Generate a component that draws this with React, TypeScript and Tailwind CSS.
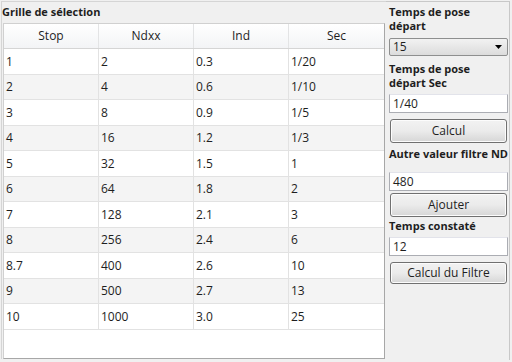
import React from 'react';

const rows = [
  ['1', '2', '0.3', '1/20'],
  ['2', '4', '0.6', '1/10'],
  ['3', '8', '0.9', '1/5'],
  ['4', '16', '1.2', '1/3'],
  ['5', '32', '1.5', '1'],
  ['6', '64', '1.8', '2'],
  ['7', '128', '2.1', '3'],
  ['8', '256', '2.4', '6'],
  ['8.7', '400', '2.6', '10'],
  ['9', '500', '2.7', '13'],
  ['10', '1000', '3.0', '25'],
];

const headers = ['Stop', 'Ndxx', 'Ind', 'Sec'];

function Button({ label }: { label: string }) {
  return (
    <button
      type="button"
      className="w-[117px] ml-px rounded-[3px] border border-[#707070] bg-gradient-to-b from-[#f2f2f2] via-[#ebebeb] to-[#d6d6d6] text-[12px] text-[#1e1e1e] shadow-[inset_0_0_0_1px_#fcfcfc]"
    >
      {label}
    </button>
  );
}

function Field({ value }: { value: string }) {
  return (
    <div className="h-[19px] border border-[#abadb3] border-t-[#e2e3ea] bg-white pl-[3px] text-[12px] leading-[17px] text-[#1e1e1e]">
      {value}
    </div>
  );
}

function Label({ children }: { children: React.ReactNode }) {
  return (
    <div className="h-[14px] text-[11px] font-bold leading-[14px] text-[#1e1e1e] whitespace-nowrap">
      {children}
    </div>
  );
}

export default function App() {
  return (
    <div className="w-[512px] h-[362px] bg-[#f0f0f0] flex font-['Open_Sans','Noto_Sans',sans-serif] overflow-hidden">
      <div className="w-[386px] pt-px pl-px">
        <div className="h-[358px] border-t border-l border-[#d5d5d5] flex flex-col">
          <div className="h-[21px] text-[11px] font-bold leading-[20px] text-[#1e1e1e]">
            Grille de sélection
          </div>
          <div className="ml-px w-[382px] flex-1 border border-[#a7a7a7] border-t-[#d0d0d0] border-l-[#d0d0d0] bg-white">
            <div className="grid grid-cols-4 h-[25px] bg-gradient-to-b from-white to-[#f3f4f6] border-b border-[#d5d5d5]">
              {headers.map((h) => (
                <div
                  key={h}
                  className="flex items-center justify-center border-r border-[#e3e4e5] text-[12px] text-[#1e1e1e] last:border-r-0"
                >
                  {h}
                </div>
              ))}
            </div>
            {rows.map((r, i) => (
              <div
                key={i}
                className={`grid grid-cols-4 border-b border-[#e2e2e2] ${i % 2 === 1 ? 'bg-[#f4f4f4]' : 'bg-white'}`}
                style={{ height: i % 2 === 0 ? 26 : 25 }}
              >
                {r.map((c, j) => (
                  <div
                    key={j}
                    className="flex items-center pl-[2px] border-r border-[#e2e2e2] text-[12px] text-[#1e1e1e] last:border-r-0"
                  >
                    {c}
                  </div>
                ))}
              </div>
            ))}
          </div>
        </div>
      </div>
      <div className="w-[124px] pt-px">
        <div className="h-[359px] border-t border-r border-[#c8c8c8] pl-[3px] pr-px flex flex-col">
          <div className="mt-[3px]">
            <Label>Temps de pose</Label>
            <Label>départ</Label>
          </div>
          <div className="mt-[5px] h-[18px] flex items-center justify-between rounded-[2px] border border-[#8e8f8f] bg-gradient-to-b from-[#f2f2f2] to-[#dcdcdc] pl-[3px] pr-[5px] text-[12px] text-[#1e1e1e]">
            <span>15</span>
            <svg width="7" height="4" viewBox="0 0 7 4">
              <path d="M0 0h7L3.5 4z" fill="#000" />
            </svg>
          </div>
          <div className="mt-[6px]">
            <Label>Temps de pose</Label>
            <Label>départ Sec</Label>
          </div>
          <div className="mt-[4px]">
            <Field value="1/40" />
          </div>
          <div className="mt-[6px] h-[24px] flex">
            <Button label="Calcul" />
          </div>
          <div className="mt-[4px]">
            <Label>Autre valeur filtre ND</Label>
          </div>
          <div className="mt-[11px]">
            <Field value="480" />
          </div>
          <div className="mt-[2px] h-[24px] flex">
            <Button label="Ajouter" />
          </div>
          <div className="mt-[2px]">
            <Label>Temps constaté</Label>
          </div>
          <div className="mt-[4px]">
            <Field value="12" />
          </div>
          <div className="mt-[6px] h-[22px] flex">
            <Button label="Calcul du Filtre" />
          </div>
        </div>
      </div>
    </div>
  );
}
